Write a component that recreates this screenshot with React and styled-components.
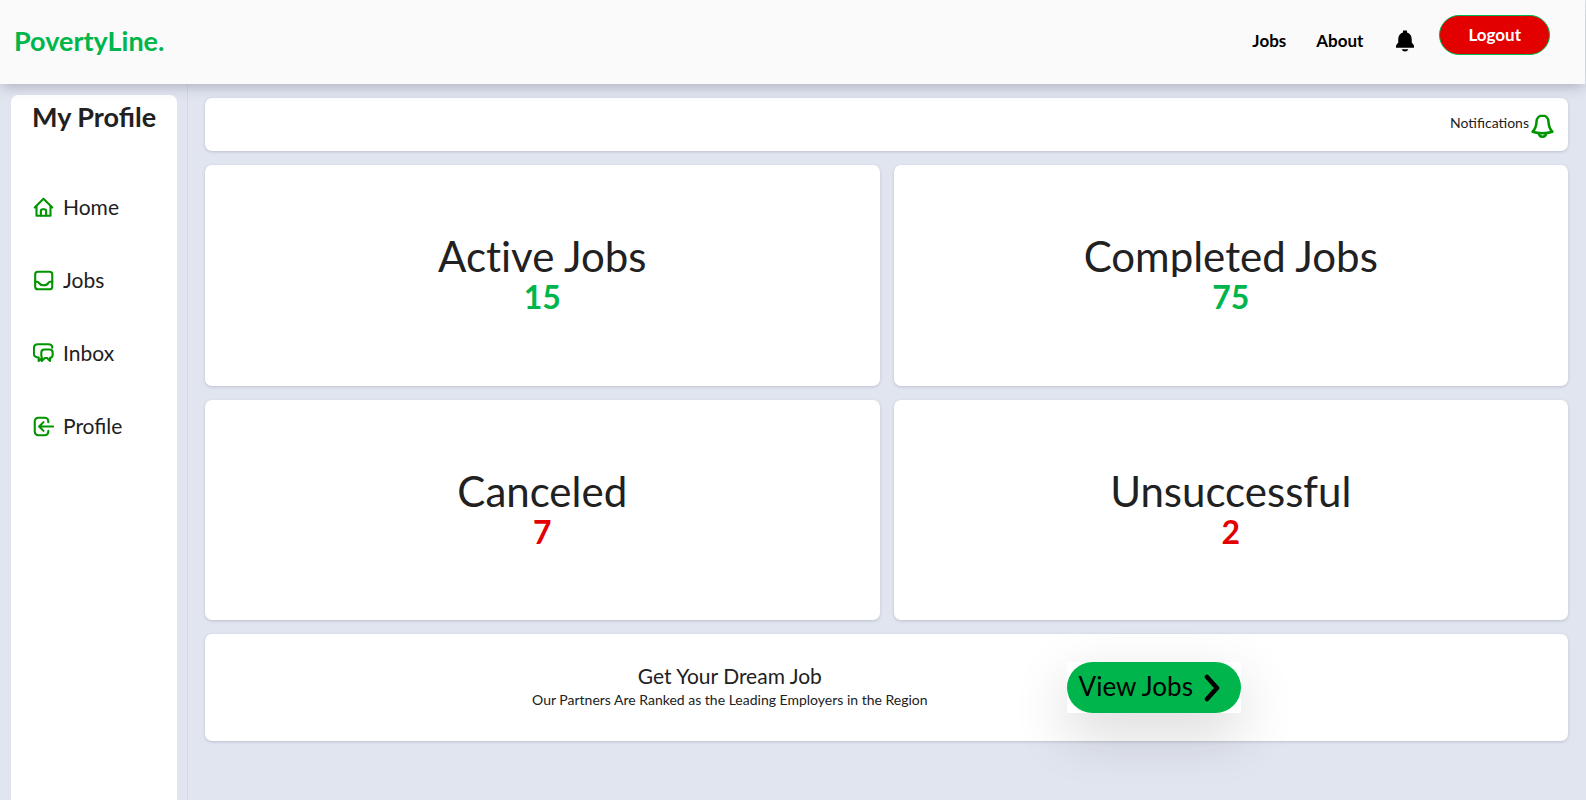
import React from "react";
import styled, { createGlobalStyle } from "styled-components";
import { IoNotificationsSharp } from "react-icons/io5";

const GlobalStyle = createGlobalStyle`
  *, *::before, *::after { box-sizing: border-box; }
  html { font-size: 14px; }
  body {
    margin: 0;
    background: #e1e5f0;
    color: #212121;
    font-family: Lato, "Open Sans", sans-serif;
    font-size: 14px;
    line-height: 20px;
  }
  h1, h2, p { margin: 0; }
  a { color: inherit; text-decoration: none; }
  button { font-family: inherit; cursor: pointer; }
`;

const Page = styled.div`
  display: flex;
  flex-direction: column;
  height: 100vh;
  overflow: hidden;
`;

const Header = styled.header`
  position: relative;
  z-index: 1;
  display: flex;
  justify-content: space-between;
  flex: none;
  height: 84px;
  margin-right: 1px;
  padding: 0 35px 0 14px;
  background: #fafafa;
  box-shadow: 0 5px 12px -2px rgba(40, 40, 70, 0.26);
`;

const Brand = styled.a`
  align-self: center;
  padding-bottom: 2px;
  color: #00b64c;
  font-size: 27px;
  font-weight: 700;
  line-height: 32px;
`;

const Nav = styled.nav`
  display: flex;
  align-items: flex-start;
  gap: 22px;
  padding-top: 15px;
`;

const NavLinks = styled.div`
  display: flex;
  align-items: center;
  gap: 30px;
  padding-top: 14px;
  color: #000;
  font-size: 17px;
  font-weight: 700;
`;

const BellLink = styled.a`
  display: flex;
`;

const LogoutButton = styled.button`
  height: 40px;
  padding: 0 28px 2px;
  border: 1px solid #00b64c;
  border-radius: 20px;
  background: #e30000;
  color: #fff;
  font-size: 17px;
  font-weight: 700;
`;

const Body = styled.div`
  display: flex;
  flex: 1;
  min-height: 0;
`;

const SidebarColumn = styled.div`
  display: flex;
  flex: none;
  width: 188px;
  padding: 11px 10px 0 11px;
  border-right: 1px solid #d5d9e5;
`;

const Sidebar = styled.aside`
  flex: 1;
  padding: 6px 21px;
  border-radius: 7px 7px 0 0;
  background: #fff;
`;

const SidebarTitle = styled.h1`
  font-size: 27px;
  line-height: 32px;
  white-space: nowrap;
`;

const Menu = styled.ul`
  display: flex;
  flex-direction: column;
  gap: 45px;
  margin: 60px 0 0;
  padding: 0 0 0 1px;
  list-style: none;
`;

const MenuLink = styled.a`
  display: flex;
  align-items: center;
  gap: 9px;
  font-size: 21px;
  line-height: 28px;
`;

const StrokeIcon = styled.svg`
  flex: none;
  width: ${({ $size }) => $size}px;
  height: ${({ $size }) => $size}px;
  fill: none;
  stroke: #009400;
  stroke-width: 2.4;
  stroke-linecap: round;
  stroke-linejoin: round;
`;

const Main = styled.main`
  display: flex;
  flex: 1;
  flex-direction: column;
  gap: 14px;
  padding: 14px 18px 14px 17px;
`;

const Card = styled.section`
  border-radius: 7px;
  background: #fff;
  box-shadow: 0 1px 3px rgba(60, 60, 90, 0.22);
`;

const NotificationBar = styled(Card)`
  display: flex;
  justify-content: flex-end;
  align-items: center;
  height: 53px;
  padding: 2px 13px 0;
`;

const NotificationLink = styled.a`
  display: flex;
  align-items: flex-start;
  gap: 1px;
`;

const Stats = styled.div`
  display: grid;
  grid-template-columns: 1fr 1fr;
  grid-template-rows: 1fr 1fr;
  gap: 14px;
  height: 455px;
`;

const StatCard = styled(Card)`
  display: flex;
  flex-direction: column;
  align-items: center;
  padding-top: 70px;
`;

const StatTitle = styled.h2`
  overflow: hidden;
  font-size: 42px;
  font-weight: 400;
  font-variant-ligatures: none;
  line-height: 42px;
`;

const StatValue = styled.p`
  color: ${({ $negative }) => ($negative ? "#e30000" : "#00b64c")};
  font-size: 32px;
  font-weight: 700;
  line-height: 40px;
`;

const Promo = styled(Card)`
  display: flex;
  justify-content: center;
  align-items: center;
  gap: 139px;
  height: 107px;
`;

const PromoText = styled.div`
  padding-bottom: 3px;
  text-align: center;
`;

const PromoTitle = styled.h2`
  font-size: 21px;
  font-weight: 400;
  line-height: 28px;
`;

const ButtonPlate = styled.div`
  background: #fff;
  box-shadow: 0 20px 56px rgba(0, 0, 0, 0.16);
`;

const ViewJobsButton = styled.button`
  display: flex;
  align-items: center;
  gap: 11px;
  height: 51px;
  padding: 0 21px 0 12px;
  border: 0;
  border-radius: 26px;
  background: #00b64c;
  color: #000;
  font-size: 26px;
`;

const ButtonLabel = styled.span`
  padding-bottom: 4px;
`;

const ChevronIcon = styled.svg`
  width: 16px;
  height: 28px;
  fill: none;
  stroke: #000;
  stroke-width: 4.6;
  stroke-linecap: round;
  stroke-linejoin: round;
`;

const MENU = [
  {
    label: "Home",
    icon: (
      <>
        <path d="M2 12 12 2l10 10" />
        <path d="M4 11v10.500h16V11" />
        <path d="M9 21v-5a2 2 0 0 1 2-2h2a2 2 0 0 1 2 2v5" />
      </>
    ),
  },
  {
    label: "Jobs",
    icon: (
      <>
        <rect x="2.500" y="2" width="19.500" height="20" rx="3" />
        <path d="M2.500 13.500H5c1 0 1.500.7 2 1.500.8 1.300 2.500 2.500 5.200 2.500s4.400-1.200 5.200-2.500c.5-.8 1-1.500 2-1.500H22" />
      </>
    ),
  },
  {
    label: "Inbox",
    icon: (
      <>
        <path d="M6.500 20.500v-4C3 16.500 1 15 1 12V6c0-3 1.500-4.500 4.500-4.500h12c3 0 4.500 1.500 4.500 4M6.500 20.500 9 18.500" />
        <path d="M13 7.500h6a3.500 3.500 0 0 1 3.500 3.500v2.500a3.500 3.500 0 0 1-3 3.500v3.500L16 17.200h-2.500L10 20.500V16.200A3.500 3.500 0 0 1 9.500 14v-3A3.500 3.500 0 0 1 13 7.500z" />
      </>
    ),
  },
  {
    label: "Profile",
    icon: (
      <>
        <path d="M17.500 7V6a4 4 0 0 0-4-4H6a4 4 0 0 0-4 4v12a4 4 0 0 0 4 4h7.500a4 4 0 0 0 4-4v-1" />
        <path d="M23 12H8m4-5-5 5 5 5" />
      </>
    ),
  },
];

const STATS = [
  { title: "Active Jobs", value: 15 },
  { title: "Completed Jobs", value: 75 },
  { title: "Canceled", value: 7, negative: true },
  { title: "Unsuccessful", value: 2, negative: true },
];

export default function App() {
  return (
    <Page>
      <GlobalStyle />
      <Header>
        <Brand href="#">PovertyLine.</Brand>
        <Nav>
          <NavLinks>
            <a href="#jobs">Jobs</a>
            <a href="#about">About</a>
            <BellLink href="#alerts" aria-label="Alerts">
              <IoNotificationsSharp size={24} />
            </BellLink>
          </NavLinks>
          <LogoutButton type="button">Logout</LogoutButton>
        </Nav>
      </Header>
      <Body>
        <SidebarColumn>
          <Sidebar>
            <SidebarTitle>My Profile</SidebarTitle>
            <Menu>
              {MENU.map(({ label, icon }) => (
                <li key={label}>
                  <MenuLink href={`#${label.toLowerCase()}`}>
                    <StrokeIcon $size={21} viewBox="0 0 24 24" aria-hidden="true">
                      {icon}
                    </StrokeIcon>
                    {label}
                  </MenuLink>
                </li>
              ))}
            </Menu>
          </Sidebar>
        </SidebarColumn>
        <Main>
          <NotificationBar>
            <NotificationLink href="#notifications">
              Notifications
              <StrokeIcon $size={25} viewBox="0 0 24 24" aria-hidden="true">
                <path d="M12 2.500c-3.500 0-5.500 2.500-5.700 5.500-.2 4-.8 7-3.800 10 3 1 6 1.400 9.500 1.400s6.500-.4 9.500-1.400c-3-3-3.600-6-3.800-10-.2-3-2.200-5.500-5.700-5.500z" />
                <path d="M8.500 19.500c.3 2 1.500 3.300 3.500 3.300s3.200-1.300 3.500-3.300" />
              </StrokeIcon>
            </NotificationLink>
          </NotificationBar>
          <Stats>
            {STATS.map(({ title, value, negative }) => (
              <StatCard key={title}>
                <StatTitle>{title}</StatTitle>
                <StatValue $negative={negative}>{value}</StatValue>
              </StatCard>
            ))}
          </Stats>
          <Promo>
            <PromoText>
              <PromoTitle>Get Your Dream Job</PromoTitle>
              <p>Our Partners Are Ranked as the Leading Employers in the Region</p>
            </PromoText>
            <ButtonPlate>
              <ViewJobsButton type="button">
                <ButtonLabel>View Jobs</ButtonLabel>
                <ChevronIcon viewBox="0 0 16 28" aria-hidden="true">
                  <path d="m3 3 10 11L3 25" />
                </ChevronIcon>
              </ViewJobsButton>
            </ButtonPlate>
          </Promo>
        </Main>
      </Body>
    </Page>
  );
}
